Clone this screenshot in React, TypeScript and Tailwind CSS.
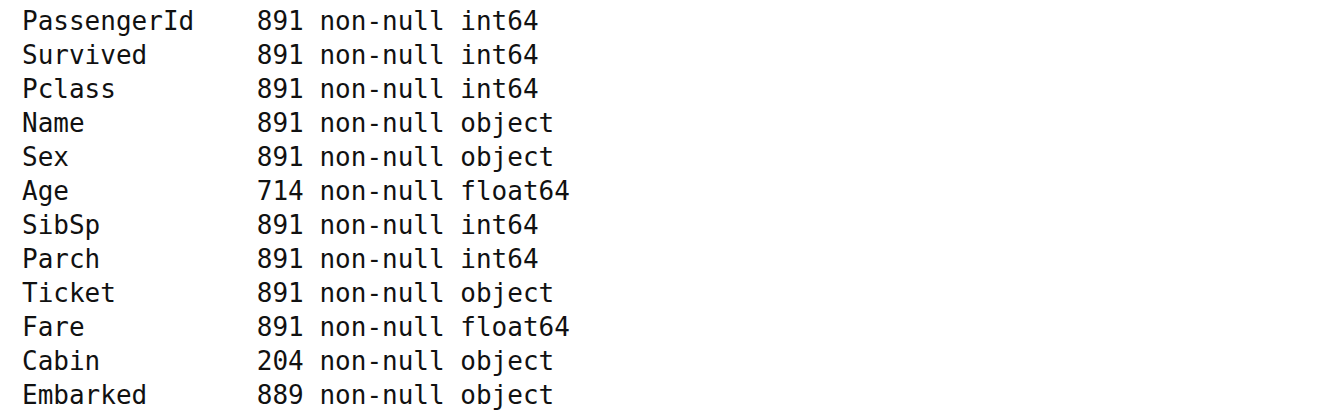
const rows: [string, string, string][] = [
  ["PassengerId", "891", "int64"],
  ["Survived", "891", "int64"],
  ["Pclass", "891", "int64"],
  ["Name", "891", "object"],
  ["Sex", "891", "object"],
  ["Age", "714", "float64"],
  ["SibSp", "891", "int64"],
  ["Parch", "891", "int64"],
  ["Ticket", "891", "object"],
  ["Fare", "891", "float64"],
  ["Cabin", "204", "object"],
  ["Embarked", "889", "object"],
];

export default function App() {
  return (
    <div className="w-[1318px] h-[414px] bg-white pl-[22px] pt-[4px] font-['DejaVu_Sans_Mono',monospace] text-[26px] leading-[34px] text-[#111]">
      {rows.map(([col, count, dtype]) => (
        <div key={col} className="flex whitespace-pre">
          <span className="w-[15ch]">{col}</span>
          <span>
            {count} non-null {dtype}
          </span>
        </div>
      ))}
    </div>
  );
}
